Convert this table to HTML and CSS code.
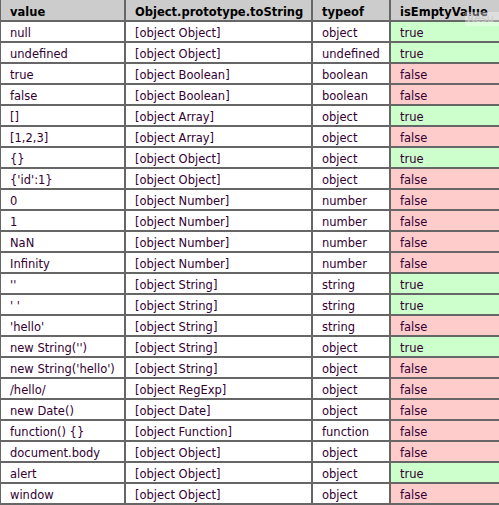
FILE: index.html
```html
<!DOCTYPE html>
<html>
<head>
<meta charset="utf-8">
<link rel="stylesheet" href="styles.css">
</head>
<body>
<table class="results">
<colgroup><col class="c1"><col class="c2"><col class="c3"><col class="c4"></colgroup>
<thead>
<tr><th>value</th><th>Object.prototype.toString</th><th>typeof</th><th>isEmptyValue</th></tr>
</thead>
<tbody>
<tr><td>null</td><td>[object Object]</td><td>object</td><td class="yes">true</td></tr>
<tr><td>undefined</td><td>[object Object]</td><td>undefined</td><td class="yes">true</td></tr>
<tr><td>true</td><td>[object Boolean]</td><td>boolean</td><td class="no">false</td></tr>
<tr><td>false</td><td>[object Boolean]</td><td>boolean</td><td class="no">false</td></tr>
<tr><td>[]</td><td>[object Array]</td><td>object</td><td class="yes">true</td></tr>
<tr><td>[1,2,3]</td><td>[object Array]</td><td>object</td><td class="no">false</td></tr>
<tr><td>{}</td><td>[object Object]</td><td>object</td><td class="yes">true</td></tr>
<tr><td>{'id':1}</td><td>[object Object]</td><td>object</td><td class="no">false</td></tr>
<tr><td>0</td><td>[object Number]</td><td>number</td><td class="no">false</td></tr>
<tr><td>1</td><td>[object Number]</td><td>number</td><td class="no">false</td></tr>
<tr><td>NaN</td><td>[object Number]</td><td>number</td><td class="no">false</td></tr>
<tr><td>Infinity</td><td>[object Number]</td><td>number</td><td class="no">false</td></tr>
<tr><td>''</td><td>[object String]</td><td>string</td><td class="yes">true</td></tr>
<tr><td>' '</td><td>[object String]</td><td>string</td><td class="yes">true</td></tr>
<tr><td>'hello'</td><td>[object String]</td><td>string</td><td class="no">false</td></tr>
<tr><td>new String('')</td><td>[object String]</td><td>object</td><td class="yes">true</td></tr>
<tr><td>new String('hello')</td><td>[object String]</td><td>object</td><td class="no">false</td></tr>
<tr><td>/hello/</td><td>[object RegExp]</td><td>object</td><td class="no">false</td></tr>
<tr><td>new Date()</td><td>[object Date]</td><td>object</td><td class="no">false</td></tr>
<tr><td>function() {}</td><td>[object Function]</td><td>function</td><td class="no">false</td></tr>
<tr><td>document.body</td><td>[object Object]</td><td>object</td><td class="no">false</td></tr>
<tr><td>alert</td><td>[object Object]</td><td>object</td><td class="yes">true</td></tr>
<tr><td>window</td><td>[object Object]</td><td>object</td><td class="no">false</td></tr>
</tbody>
</table>
<div class="result-tag">Resu</div>
</body>
</html>
```
FILE: styles.css
```css
html, body {
  margin: 0;
  padding: 0;
  background: #ffffff;
  overflow: hidden;
}
body {
  position: relative;
  width: 499px;
  height: 505px;
  font-family: "DejaVu Sans", Verdana, sans-serif;
  font-size: 11.5px;
}
.results {
  border-collapse: collapse;
  table-layout: fixed;
  margin: -2px 0 0 -1px;
  width: 500px;
}
.c1 { width: 125px; }
.c2 { width: 187px; }
.c3 { width: 78px; }
.c4 { width: 110px; }
.results th,
.results td {
  border: 2px solid #666666;
  padding: 3px 0 0 9px;
  box-sizing: border-box;
  text-align: left;
  white-space: nowrap;
  overflow: hidden;
  line-height: 16px;
  color: #330033;
}
.results tbody tr { height: 21px; }
.results thead tr { height: 22px; }
.results th {
  background: #cccccc;
  color: #000000;
  font-weight: bold;
}
.results td.yes { background: #ccffcc; }
.results td.no { background: #ffcccc; }
.result-tag {
  position: absolute;
  left: 465px;
  top: 12px;
  width: 32px;
  height: 14px;
  background: rgba(255, 255, 255, 0.35);
  color: #c8c8c8;
  font-size: 11px;
  line-height: 14px;
  padding-left: 2px;
  overflow: hidden;
  white-space: nowrap;
}
```
